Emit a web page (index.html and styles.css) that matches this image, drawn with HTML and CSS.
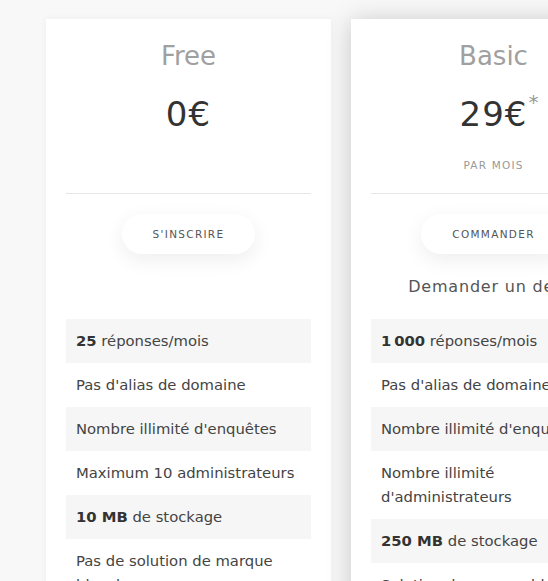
FILE: index.html
```html
<!DOCTYPE html>
<html lang="fr">
<head>
<meta charset="utf-8">
<link rel="stylesheet" href="styles.css">
</head>
<body>
<div class="plans">
  <div class="card">
    <h2 class="name">Free</h2>
    <div class="price">0€</div>
    <div class="period hidden">PAR MOIS</div>
    <hr class="divider">
    <div class="cta"><a class="btn">S'INSCRIRE</a></div>
    <div class="quote hidden">Demander un devis</div>
    <ul class="features">
      <li><b>25</b> réponses/mois</li>
      <li>Pas d'alias de domaine</li>
      <li>Nombre illimité d'enquêtes</li>
      <li>Maximum 10 administrateurs</li>
      <li><b>10 MB</b> de stockage</li>
      <li>Pas de solution de marque blanche</li>
    </ul>
  </div>
  <div class="card featured">
    <h2 class="name">Basic</h2>
    <div class="price">29€<sup class="star">*</sup></div>
    <div class="period">PAR MOIS</div>
    <hr class="divider">
    <div class="cta"><a class="btn">COMMANDER</a></div>
    <div class="quote">Demander un devis</div>
    <ul class="features">
      <li><b>1&#8239;000</b> réponses/mois</li>
      <li>Pas d'alias de domaine</li>
      <li>Nombre illimité d'enquêtes</li>
      <li>Nombre illimité d'administrateurs</li>
      <li><b>250 MB</b> de stockage</li>
      <li>Solution de marque blanche</li>
    </ul>
  </div>
</div>
</body>
</html>
```
FILE: styles.css
```css
html,body{margin:0;padding:0;}
body{
  background:#f8f8f8;
  font-family:"DejaVu Sans",sans-serif;
  color:#444;
  overflow:hidden;
}
.plans{
  display:flex;
  gap:20px;
  padding:19px 0 0 46px;
}
.card{
  flex:0 0 285px;
  width:285px;
  background:#fff;
  padding:0 20px 20px;
  box-sizing:border-box;
  box-shadow:0 0 8px rgba(0,0,0,0.05);
}
.card.featured{
  box-shadow:0 2px 24px rgba(0,0,0,0.2);
}
.name{
  margin:0;
  padding-top:19px;
  height:36px;
  line-height:36px;
  text-align:center;
  font-weight:normal;
  font-size:26px;
  color:#a0a0a0;
}
.price{
  margin-top:20px;
  height:40px;
  line-height:40px;
  text-align:center;
  font-size:34px;
  letter-spacing:1px;
  color:#333;
  position:relative;
}
.star{
  position:absolute;
  font-size:20px;
  color:#999;
  top:-12px;
  margin-left:1px;
}
.period{
  margin-top:23px;
  height:16px;
  line-height:16px;
  text-align:center;
  font-size:10.5px;
  letter-spacing:1.2px;
  color:#999;
}
.hidden{visibility:hidden;}
.divider{
  margin:20px 0 0;
  border:0;
  border-top:1px solid #e6e6e6;
  height:0;
}
.cta{
  display:flex;
  justify-content:center;
  padding-top:20px;
}
.btn{
  display:flex;
  align-items:center;
  justify-content:center;
  height:40px;
  padding:0 31px;
  border-radius:20px;
  background:#fff;
  box-shadow:0 6px 20px rgba(0,0,0,0.07);
  font-size:10.5px;
  letter-spacing:1.3px;
  color:#555;
}
.quote{
  margin-top:22px;
  height:22px;
  line-height:22px;
  text-align:center;
  font-size:16px;
  letter-spacing:0.8px;
  color:#555;
  white-space:nowrap;
}
.features{
  list-style:none;
  margin:21px 0 0;
  padding:0;
}
.features li{
  padding:10px 10px;
  line-height:24px;
  font-size:14.8px;
  color:#444;
}
.features li:nth-child(odd){background:#f6f6f6;}
.features b{font-weight:bold;color:#333;}
```
